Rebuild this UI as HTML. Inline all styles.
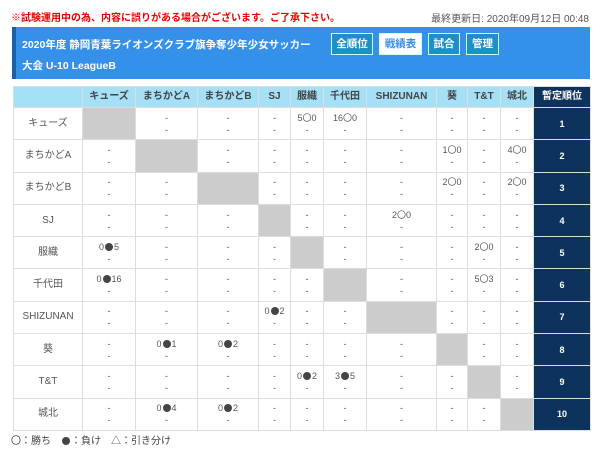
<!DOCTYPE html>
<html><head><meta charset="utf-8"><style>
body{margin:0;width:600px;height:450px;background:#fff;font-family:"Liberation Sans","Noto Sans CJK JP",sans-serif;position:relative;overflow:hidden}
.note{position:absolute;left:11px;top:9px;font-size:10px;color:#e00;font-weight:bold}
.upd{position:absolute;right:11px;top:10px;font-size:10px;color:#555}
.ban{position:absolute;left:12px;top:27px;width:574px;height:52px;background:#3590ea;border-left:4px solid #1b5fa8;color:#fff;font-weight:bold;font-size:10.5px}
.ban .t{position:absolute;left:6px;top:8px;line-height:21px;white-space:nowrap}
.btn{position:absolute;top:6px;border:1px solid #cfe;background:#1e90c8;color:#fff;font-size:10.5px;line-height:20px;text-align:center;box-sizing:border-box;height:22px}
table{position:absolute;left:13px;top:86px;border-collapse:collapse;font-size:9px;color:#555}
td,th{border:1px solid #ddd;text-align:center;padding:0;line-height:12px}
th{background:#a5e0f6;height:20px;font-size:10px;color:#444}
th.r{background:#0d325c;color:#fff}
td{height:31.3px}
td.l{font-size:10px}
td.g{background:#ccc}
td.rk{background:#0d325c;color:#fff;font-weight:bold}
b{display:inline-block;width:8px;height:8px;border-radius:50%;background:#444;margin:0 1px;vertical-align:-1px}
.leg{position:absolute;left:11px;top:432px;font-size:10px;color:#444}
</style></head><body>
<div class="note">※試験運用中の為、内容に誤りがある場合がございます。ご了承下さい。</div>
<div class="upd">最終更新日: 2020年09月12日 00:48</div>
<div class="ban"><div class="t">2020年度 静岡青葉ライオンズクラブ旗争奪少年少女サッカー<br>大会 U-10 LeagueB</div>
<div class="btn" style="left:315px;width:42px">全順位</div>
<div class="btn" style="left:363px;width:43px;background:#fff;color:#3590ea">戦績表</div>
<div class="btn" style="left:412px;width:32px">試合</div>
<div class="btn" style="left:450px;width:33px">管理</div></div>
<table>
<tr><th style="width:68px"></th><th style="width:52px">キューズ</th><th style="width:61px">まちかどA</th><th style="width:60px">まちかどB</th><th style="width:31px">SJ</th><th style="width:32px">服織</th><th style="width:42px">千代田</th><th style="width:69px">SHIZUNAN</th><th style="width:30px">葵</th><th style="width:32px">T&amp;T</th><th style="width:32px">城北</th><th class="r" style="width:56px">暫定順位</th></tr>
<tr><td class="l">キューズ</td><td class="g"></td><td>-<br>-</td><td>-<br>-</td><td>-<br>-</td><td>5〇0<br>-</td><td>16〇0<br>-</td><td>-<br>-</td><td>-<br>-</td><td>-<br>-</td><td>-<br>-</td><td class="rk">1</td></tr>
<tr><td class="l">まちかどA</td><td>-<br>-</td><td class="g"></td><td>-<br>-</td><td>-<br>-</td><td>-<br>-</td><td>-<br>-</td><td>-<br>-</td><td>1〇0<br>-</td><td>-<br>-</td><td>4〇0<br>-</td><td class="rk">2</td></tr>
<tr><td class="l">まちかどB</td><td>-<br>-</td><td>-<br>-</td><td class="g"></td><td>-<br>-</td><td>-<br>-</td><td>-<br>-</td><td>-<br>-</td><td>2〇0<br>-</td><td>-<br>-</td><td>2〇0<br>-</td><td class="rk">3</td></tr>
<tr><td class="l">SJ</td><td>-<br>-</td><td>-<br>-</td><td>-<br>-</td><td class="g"></td><td>-<br>-</td><td>-<br>-</td><td>2〇0<br>-</td><td>-<br>-</td><td>-<br>-</td><td>-<br>-</td><td class="rk">4</td></tr>
<tr><td class="l">服織</td><td>0<b></b>5<br>-</td><td>-<br>-</td><td>-<br>-</td><td>-<br>-</td><td class="g"></td><td>-<br>-</td><td>-<br>-</td><td>-<br>-</td><td>2〇0<br>-</td><td>-<br>-</td><td class="rk">5</td></tr>
<tr><td class="l">千代田</td><td>0<b></b>16<br>-</td><td>-<br>-</td><td>-<br>-</td><td>-<br>-</td><td>-<br>-</td><td class="g"></td><td>-<br>-</td><td>-<br>-</td><td>5〇3<br>-</td><td>-<br>-</td><td class="rk">6</td></tr>
<tr><td class="l">SHIZUNAN</td><td>-<br>-</td><td>-<br>-</td><td>-<br>-</td><td>0<b></b>2<br>-</td><td>-<br>-</td><td>-<br>-</td><td class="g"></td><td>-<br>-</td><td>-<br>-</td><td>-<br>-</td><td class="rk">7</td></tr>
<tr><td class="l">葵</td><td>-<br>-</td><td>0<b></b>1<br>-</td><td>0<b></b>2<br>-</td><td>-<br>-</td><td>-<br>-</td><td>-<br>-</td><td>-<br>-</td><td class="g"></td><td>-<br>-</td><td>-<br>-</td><td class="rk">8</td></tr>
<tr><td class="l">T&amp;T</td><td>-<br>-</td><td>-<br>-</td><td>-<br>-</td><td>-<br>-</td><td>0<b></b>2<br>-</td><td>3<b></b>5<br>-</td><td>-<br>-</td><td>-<br>-</td><td class="g"></td><td>-<br>-</td><td class="rk">9</td></tr>
<tr><td class="l">城北</td><td>-<br>-</td><td>0<b></b>4<br>-</td><td>0<b></b>2<br>-</td><td>-<br>-</td><td>-<br>-</td><td>-<br>-</td><td>-<br>-</td><td>-<br>-</td><td>-<br>-</td><td class="g"></td><td class="rk">10</td></tr>
</table>
<div class="leg">〇：勝ち　<b></b>：負け　△：引き分け</div>
</body></html>
